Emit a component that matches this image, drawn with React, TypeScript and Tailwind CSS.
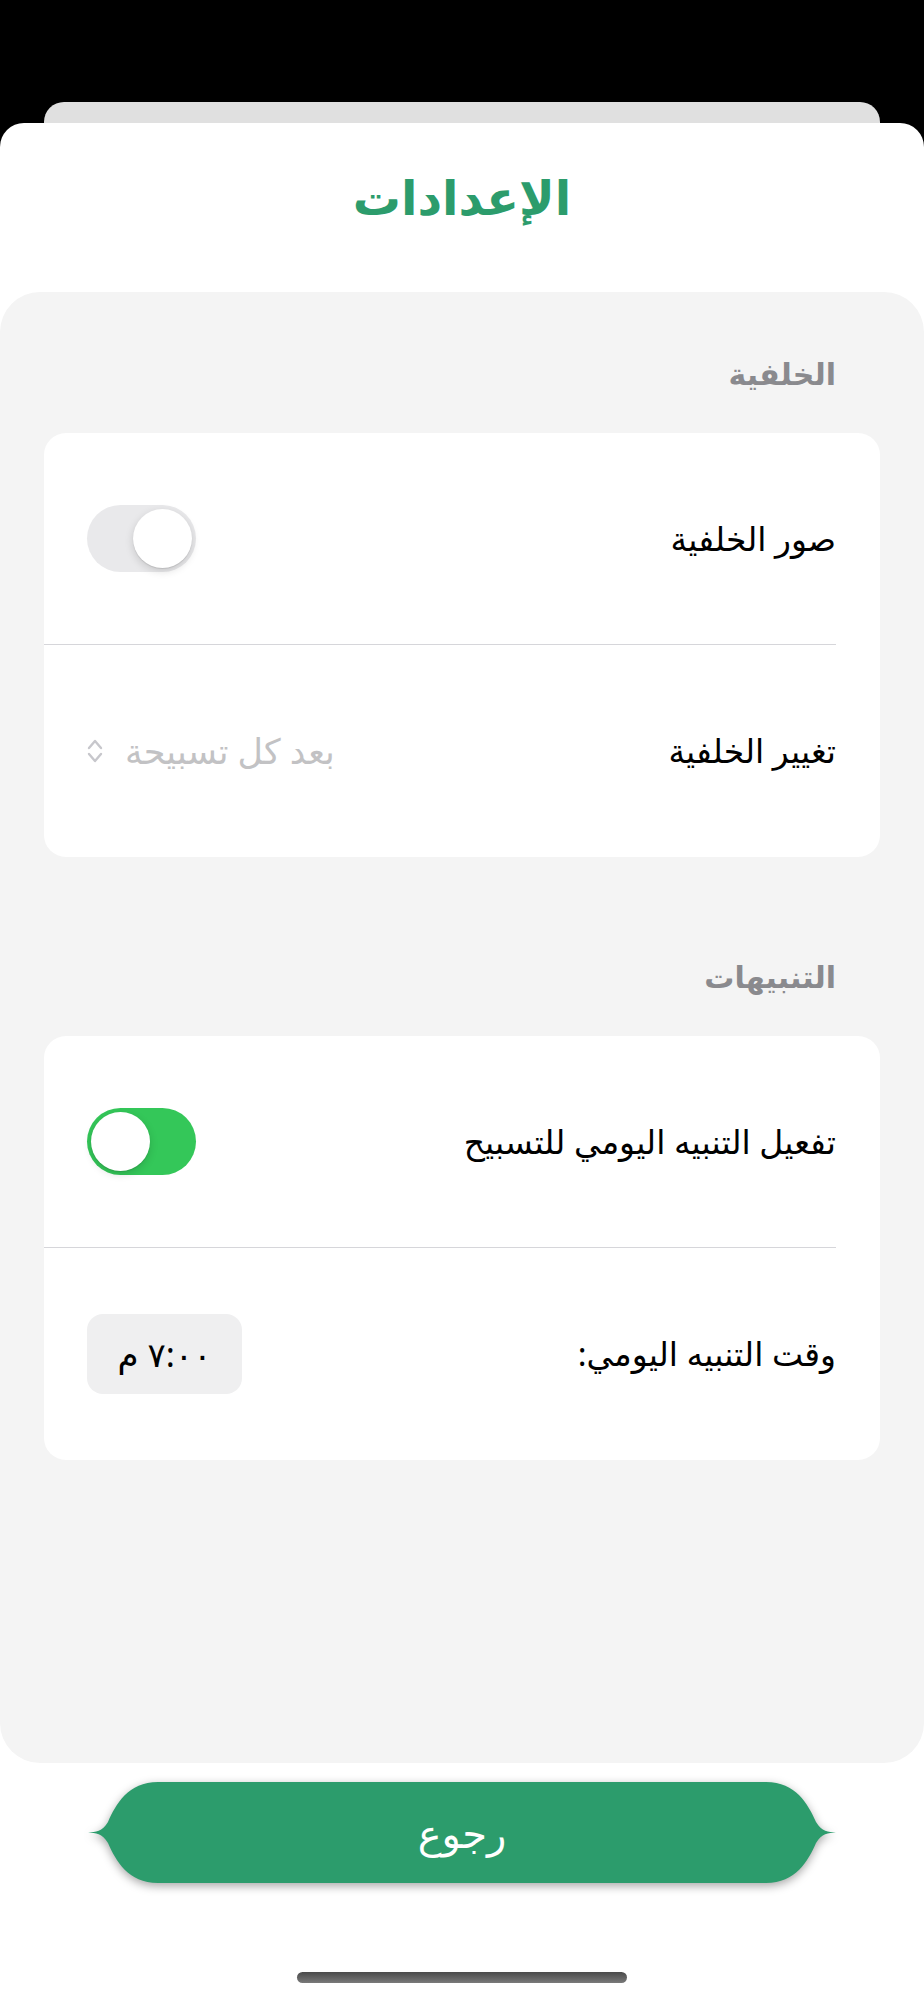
import React from "react";

const ar = { fontFamily: '"Noto Sans", "DejaVu Sans", sans-serif' };

// rtl: justify-start puts the knob on the right (off), justify-end on the left (on)
function Toggle({ on }: { on: boolean }) {
  return (
    <div
      className={`flex h-[67px] w-[109px] items-center rounded-full p-[4px] ${
        on ? "justify-end bg-[#34c759]" : "justify-start bg-[#e9e9eb]"
      }`}
    >
      <div className="h-[59px] w-[59px] rounded-full bg-white shadow-[0_3px_8px_rgba(0,0,0,0.15),0_1px_1px_rgba(0,0,0,0.1)]" />
    </div>
  );
}

function UpDown() {
  return (
    <svg width="16" height="26" viewBox="0 0 16 26" fill="none" stroke="#c7c7cc" strokeWidth="2.4" strokeLinecap="round" strokeLinejoin="round">
      <path d="M2 10 L8 3 L14 10" />
      <path d="M2 16 L8 23 L14 16" />
    </svg>
  );
}

function Row({ label, children, divider }: { label: string; children: React.ReactNode; divider?: boolean }) {
  return (
    <div className="pr-[44px]">
      <div
        className={`flex h-[212px] items-center justify-between pl-[43px] ${
          divider ? "border-b border-[#d6d6da]" : ""
        }`}
      >
        <span className="text-[33px] text-black">{label}</span>
        {children}
      </div>
    </div>
  );
}

function Section({ title, children }: { title: string; children: React.ReactNode }) {
  return (
    <div>
      <div className="px-[88px] text-[30px] font-bold leading-[36px] text-[#8a8a8e]">{title}</div>
      <div className="mx-[44px] mt-[41px] rounded-[22px] bg-white">{children}</div>
    </div>
  );
}

export default function App() {
  return (
    <div dir="rtl" className="flex h-[2000px] w-[924px] flex-col bg-black pt-[102px]" style={ar}>
      <div className="mx-[44px] h-[21px] rounded-t-[20px] bg-[#e0e0e0]" />
      <div className="flex flex-1 flex-col rounded-t-[24px] bg-white">
        <h1 className="pt-[44px] text-center text-[48px] font-bold leading-[60px] text-[#2c9c6c]">الإعدادات</h1>
        <div className="mt-[65px] h-[1471px] rounded-[40px] bg-[#f4f4f4] pt-[64px]">
          <Section title="الخلفية">
            <Row label="صور الخلفية" divider>
              <Toggle on={false} />
            </Row>
            <Row label="تغيير الخلفية">
              <div className="flex items-center gap-[22px]">
                <span className="text-[35px] text-[#c2c2c4]">بعد كل تسبيحة</span>
                <UpDown />
              </div>
            </Row>
          </Section>
          <div className="mt-[102px]">
            <Section title="التنبيهات">
              <Row label="تفعيل التنبيه اليومي للتسبيح" divider>
                <Toggle on={true} />
              </Row>
              <Row label="وقت التنبيه اليومي:">
                <div className="flex h-[80px] w-[155px] items-center justify-center rounded-[16px] bg-[#efeff0] text-[34px] tracking-[6px] text-black">
                  ٧:٠٠ م
                </div>
              </Row>
            </Section>
          </div>
        </div>
        <div className="relative mx-auto mt-[19px] flex h-[101px] w-[748px] items-center justify-center">
          <svg className="absolute inset-0 drop-shadow-[0_3px_5px_rgba(0,0,0,0.35)]" width="748" height="101" viewBox="0 0 748 101">
            <path
              fill="#2c9c6c"
              d="M70 0 H678 C708 0 720 22 728 40 C734 50 740 50 748 50.5 C740 51 734 51 728 61 C720 79 708 101 678 101 H70 C40 101 28 79 20 61 C14 51 8 51 0 50.5 C8 50 14 50 20 40 C28 22 40 0 70 0 Z"
            />
          </svg>
          <span className="relative text-[40px] text-white">رجوع</span>
        </div>
        <div className="mx-auto mt-[89px] h-[11px] w-[330px] rounded-full bg-gradient-to-b from-[#4a4a4a] to-[#7a7a7a]" />
      </div>
    </div>
  );
}
